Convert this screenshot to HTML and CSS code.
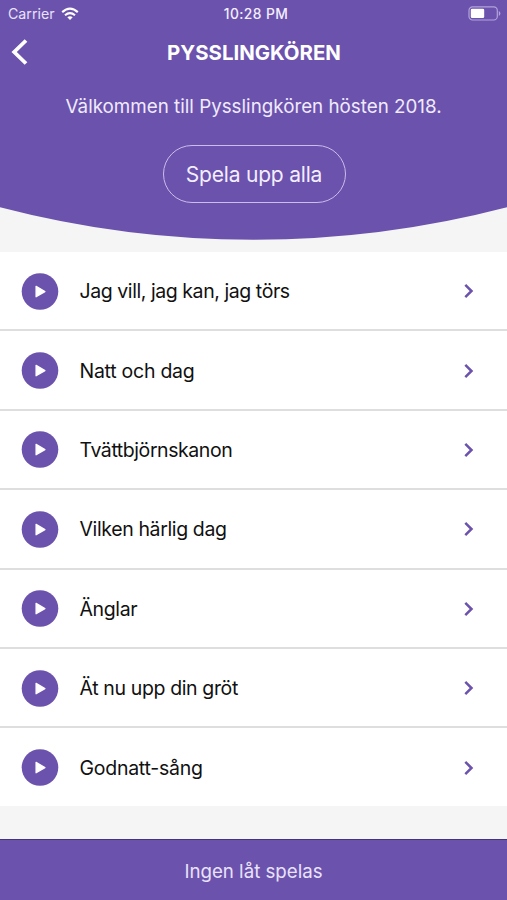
FILE: index.html
```html
<!DOCTYPE html>
<html lang="sv">
<head>
<meta charset="utf-8">
<title>Pysslingkören</title>
<link rel="stylesheet" href="styles.css">
</head>
<body>
<svg class="defs" width="0" height="0">
  <symbol id="play" viewBox="0 0 37 37"><circle cx="18.5" cy="18.5" r="18.3" fill="#6b52ad"/><path d="M14.6 13.4v10.4L23.4 18.6Z" fill="#fff" stroke="#fff" stroke-width="1.3" stroke-linejoin="round"/></symbol>
  <symbol id="next" viewBox="0 0 10 16"><path d="M1.3 1.8 7.5 8 1.3 14.2" fill="none" stroke="#6b52ad" stroke-width="2.5"/></symbol>
</svg>
<div class="screen">
  <header class="hero">
    <div class="status">
      <div class="side"><span class="carrier">Carrier</span>
        <svg class="wifi" width="18" height="14" viewBox="0 0 18 14"><g fill="none" stroke="#fff" stroke-width="2.1"><path d="M1.2 5.1Q9-1.9 16.8 5.1"/><path d="M4 8.2Q9 3.9 14 8.2"/></g><path d="M6.3 10.2Q9 8.2 11.7 10.2L9 13Z" fill="#fff"/></svg>
      </div>
      <span class="time">10:28 PM</span>
      <div class="side right"><svg width="33" height="15" viewBox="0 0 33 15"><rect x="1" y=".8" width="28.3" height="13.2" rx="3.6" fill="none" stroke="#b3a3dc" stroke-width="1.2"/><rect x="2.8" y="2.7" width="13.4" height="9.4" rx="1.4" fill="#fff"/><path d="M30.8 5v5Q32.4 9.2 32.4 7.5T30.8 5Z" fill="#b3a3dc"/></svg></div>
    </div>
    <div class="nav">
      <svg class="back" width="18" height="28" viewBox="0 0 18 28"><path d="M16 2.5 4.2 14 16 25.5" fill="none" stroke="#fff" stroke-width="3.8"/></svg>
      <h1>PYSSLINGKÖREN</h1>
    </div>
    <p class="welcome">Välkommen till Pysslingkören hösten 2018.</p>
    <button class="all"><span>Spela upp alla</span></button>
  </header>
  <svg class="curve" width="507" height="45" viewBox="0 0 507 45"><path d="M0 0V.2A1005 1005 0 0 0 507 .2V0Z" fill="#6b52ad"/></svg>
  <ul class="songs">
    <li><svg class="play"><use href="#play"/></svg><span class="tight">Jag vill, jag kan, jag törs</span><svg class="next"><use href="#next"/></svg></li>
    <li><svg class="play"><use href="#play"/></svg><span class="loose">Natt och dag</span><svg class="next"><use href="#next"/></svg></li>
    <li><svg class="play"><use href="#play"/></svg><span class="tight">Tvättbjörnskanon</span><svg class="next"><use href="#next"/></svg></li>
    <li><svg class="play"><use href="#play"/></svg><span>Vilken härlig dag</span><svg class="next"><use href="#next"/></svg></li>
    <li><svg class="play"><use href="#play"/></svg><span>Änglar</span><svg class="next"><use href="#next"/></svg></li>
    <li><svg class="play"><use href="#play"/></svg><span>Ät nu upp din gröt</span><svg class="next"><use href="#next"/></svg></li>
    <li><svg class="play"><use href="#play"/></svg><span class="loose">Godnatt-sång</span><svg class="next"><use href="#next"/></svg></li>
  </ul>
  <footer class="player"><span>Ingen låt spelas</span></footer>
</div>
</body>
</html>
```
FILE: styles.css
```css
* { box-sizing: border-box; }
body { margin: 0; font-family: Inter, sans-serif; background: #f5f5f5; color: #111; }
.defs { display: none; }
svg { display: block; flex: none; }
.screen { height: 900px; display: flex; flex-direction: column; overflow: hidden; }
.hero { height: 207px; flex: none; background: #6b52ad; color: #fff; display: flex; flex-direction: column; align-items: center; }
.status { width: 100%; height: 27px; padding: 0 6px 0 8px; display: flex; align-items: center; }
.side { flex: 1; display: flex; align-items: center; gap: 6px; }
.right { justify-content: flex-end; }
.carrier { font-size: 14.2px; color: #e9e2fa; }
.time { font-size: 13.8px; font-weight: 500; letter-spacing: 0.4px; margin-left: 3px; color: #f3eefd; }
.nav { width: 100%; height: 50px; display: grid; grid-template-columns: 40px 1fr 40px; align-items: center; padding: 0 0 0 10px; }
.nav h1 { margin: 1px 0 0; font-size: 20.4px; font-weight: 700; text-align: center; line-height: 24px; padding-right: 9px; }
.welcome { margin: 17px 0 0; font-size: 18.8px; line-height: 26px; color: #f0eafc; white-space: nowrap; }
.all { margin: 25px 0 0 1px; width: 183px; height: 58px; border: 1.5px solid #cbbdec; border-radius: 29px; background: none; color: #f3eefd; font: 21px Inter, sans-serif; letter-spacing: -0.2px; padding: 0; white-space: nowrap; }
.curve { width: 100%; }
.songs { list-style: none; margin: 0; padding: 0; background: #fff; }
.songs li { height: 79.4px; padding: 1px 33px 0 21px; display: flex; align-items: center; border-bottom: 2px solid #dedede; font-size: 19.5px; }
.songs li:last-child { border-bottom: 0; height: 78px; }
.play { width: 38px; height: 37px; }
.songs span { flex: 1; margin-left: 20.5px; letter-spacing: -0.37px; white-space: nowrap; }
.songs .tight { letter-spacing: -0.43px; }
.songs .loose { letter-spacing: -0.26px; }
.next { width: 10px; height: 16px; }
.player { margin-top: auto; height: 61px; flex: none; background: #6b52ad; border-top: 1px solid #453477; color: #e9e2fa; display: flex; align-items: center; justify-content: center; font-size: 18.7px; padding-top: 3px; }
```
